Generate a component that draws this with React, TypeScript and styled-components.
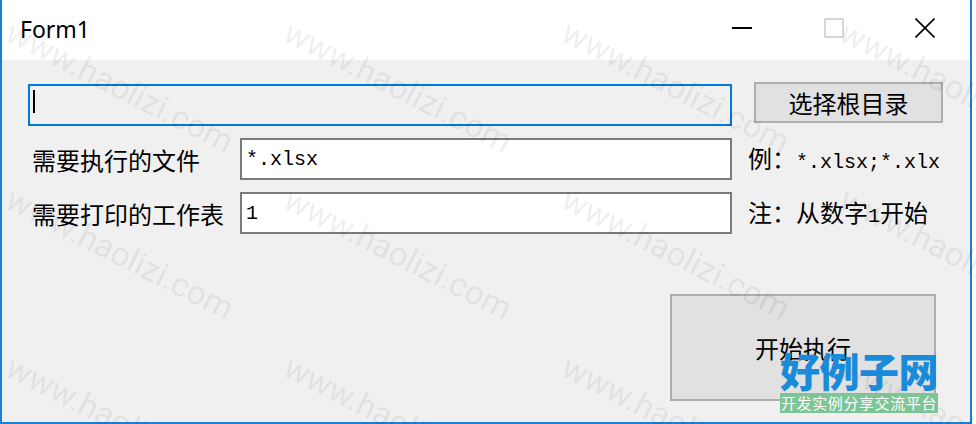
import React from "react";
import styled, { createGlobalStyle } from "styled-components";

const GlobalStyle = createGlobalStyle`
  html, body { margin: 0; padding: 0; background: #fff; }
  body {
    width: 976px;
    height: 424px;
    overflow: hidden;
    font-family: "Noto Sans CJK SC", sans-serif;
  }
`;

const Page = styled.div`
  position: relative;
  width: 976px;
  height: 424px;
  background: #fff;
`;

const Window = styled.div`
  width: 972px;
  height: 424px;
  box-sizing: border-box;
  border: 2px solid #1a7fd6;
  border-top: none;
  display: flex;
  flex-direction: column;
  overflow: hidden;
`;

const TitleBar = styled.div`
  height: 60px;
  flex: none;
  background: #fff;
  display: flex;
  align-items: center;
`;

const Title = styled.div`
  flex: 1;
  padding: 0 0 2px 18px;
  font-family: "Segoe UI", "Noto Sans", sans-serif;
  font-size: 23px;
  color: #000;
`;

const CtrlButton = styled.div<{ $w: number }>`
  width: ${(p) => p.$w}px;
  height: 60px;
  box-sizing: border-box;
  padding-bottom: 4px;
  display: flex;
  align-items: center;
  justify-content: center;
`;

const Body = styled.div`
  flex: 1;
  background: #f0f0f0;
  box-sizing: border-box;
  padding: 24px 0 0 26px;
  display: flex;
  flex-direction: column;
`;

const FormGrid = styled.div`
  display: grid;
  grid-template-columns: 196px 492px 206px;
  grid-auto-rows: 42px;
  column-gap: 16px;
  row-gap: 12px;
`;

const TextBox = styled.div<{ $active?: boolean; $span?: number }>`
  grid-column: span ${(p) => p.$span ?? 1};
  box-sizing: border-box;
  height: 42px;
  border: 2px solid ${(p) => (p.$active ? "#0078d7" : "#7a7a7a")};
  background: ${(p) => (p.$active ? "#f0f0f0" : "#fff")};
  padding: ${(p) => (p.$active ? "4px 0 0 3px" : "8px 0 0 4px")};
  font-family: "Liberation Mono", monospace;
  font-size: 20px;
  line-height: 24px;
  color: #000;
  white-space: pre;
`;

const Caret = styled.span`
  display: block;
  width: 2px;
  height: 23px;
  background: #000;
`;

const WinButton = styled.div<{ $w: number; $h: number }>`
  box-sizing: border-box;
  width: ${(p) => p.$w}px;
  height: ${(p) => p.$h}px;
  background: #e1e1e1;
  border: 2px solid #adadad;
  display: flex;
  align-items: center;
  justify-content: center;
  font-family: "Noto Sans CJK SC", sans-serif;
  font-size: 24px;
  line-height: 24px;
  color: #000;
`;

const BrowseButton = styled(WinButton)`
  margin: -2px 0 0 6px;
`;

const Label = styled.div`
  align-self: center;
  padding: 2px 0 0 4px;
  font-family: "Noto Sans CJK SC", sans-serif;
  font-size: 24px;
  line-height: 24px;
  color: #000;
  white-space: nowrap;
`;

const Hint = styled(Label)`
  padding-left: 0;
`;

const Mono = styled.span`
  font-family: "Liberation Mono", monospace;
  font-size: 20px;
`;

const ActionRow = styled.div`
  display: flex;
  justify-content: flex-end;
  padding-right: 34px;
  margin-top: 60px;
`;

const Overlay = styled.div`
  position: absolute;
  inset: 0;
  overflow: hidden;
  pointer-events: none;
`;

const Mark = styled.div`
  position: absolute;
  transform-origin: 0 0;
  transform: rotate(27deg);
  font-family: Roboto, "Liberation Sans", sans-serif;
  font-size: 33px;
  line-height: 33px;
  color: rgba(0, 0, 0, 0.075);
  white-space: nowrap;
`;

const Logo = styled.div`
  position: absolute;
  left: 780px;
  top: 349px;
  width: 158px;
  display: flex;
  flex-direction: column;
  align-items: stretch;
`;

const LogoTitle = styled.div`
  font-family: "Noto Sans CJK SC", sans-serif;
  font-weight: 900;
  font-size: 40px;
  line-height: 42px;
  letter-spacing: -0.5px;
  color: #1a8bd8;
  white-space: nowrap;
`;

const LogoBar = styled.div`
  margin-top: 2px;
  height: 20px;
  background: #7dc597;
  color: #fff;
  font-family: "Noto Sans CJK SC", sans-serif;
  font-size: 15px;
  line-height: 20px;
  letter-spacing: 0.6px;
  text-align: center;
  white-space: nowrap;
`;

const MinIcon = () => (
  <svg width="20" height="20" viewBox="0 0 20 20">
    <line x1="0" y1="10" x2="20" y2="10" stroke="#000" strokeWidth="2" />
  </svg>
);

const MaxIcon = () => (
  <svg width="20" height="20" viewBox="0 0 20 20">
    <rect x="1" y="1" width="18" height="18" fill="none" stroke="#cccccc" strokeWidth="1.6" />
  </svg>
);

const CloseIcon = () => (
  <svg width="20" height="20" viewBox="0 0 20 20">
    <line x1="0.5" y1="0.5" x2="19.5" y2="19.5" stroke="#000" strokeWidth="1.6" />
    <line x1="19.5" y1="0.5" x2="0.5" y2="19.5" stroke="#000" strokeWidth="1.6" />
  </svg>
);

const markRows = [-152, 15, 182, 350];
const markCols = [-262, 16, 294, 572, 850];

export default function App() {
  return (
    <>
      <GlobalStyle />
      <Page>
        <Window>
          <TitleBar>
            <Title>Form1</Title>
            <CtrlButton $w={92}>
              <MinIcon />
            </CtrlButton>
            <CtrlButton $w={92}>
              <MaxIcon />
            </CtrlButton>
            <CtrlButton $w={90}>
              <CloseIcon />
            </CtrlButton>
          </TitleBar>
          <Body>
            <FormGrid>
              <TextBox $active $span={2}>
                <Caret />
              </TextBox>
              <BrowseButton $w={189} $h={41}>选择根目录</BrowseButton>

              <Label>需要执行的文件</Label>
              <TextBox>*.xlsx</TextBox>
              <Hint>
                例：<Mono>*.xlsx;*.xlx</Mono>
              </Hint>

              <Label>需要打印的工作表</Label>
              <TextBox>1</TextBox>
              <Hint>
                注：从数字<Mono>1</Mono>开始
              </Hint>
            </FormGrid>
            <ActionRow>
              <WinButton $w={266} $h={107}>开始执行</WinButton>
            </ActionRow>
          </Body>
        </Window>
        <Overlay>
          {markRows.map((y) =>
            markCols.map((x) => (
              <Mark key={`${x}-${y}`} style={{ left: x, top: y }}>
                www.haolizi.com
              </Mark>
            ))
          )}
          <Logo>
            <LogoTitle>好例子网</LogoTitle>
            <LogoBar>开发实例分享交流平台</LogoBar>
          </Logo>
        </Overlay>
      </Page>
    </>
  );
}
